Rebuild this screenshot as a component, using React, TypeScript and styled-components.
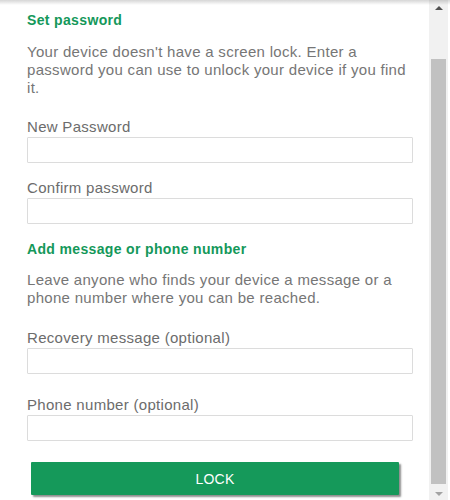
import React from "react";
import styled, { createGlobalStyle } from "styled-components";

const Global = createGlobalStyle`
  html, body { margin: 0; padding: 0; background: #ffffff; }
  body { font-family: "Liberation Sans", Arial, sans-serif; }
  * { box-sizing: border-box; }
`;

const Frame = styled.div`
  width: 450px;
  height: 500px;
  display: flex;
  flex-direction: row;
  overflow: hidden;
  position: relative;
  background: #fff;
  &::after {
    content: "";
    position: absolute;
    left: 0;
    right: 0;
    top: 0;
    height: 5px;
    background: linear-gradient(rgba(0, 0, 0, 0.16), rgba(0, 0, 0, 0));
    pointer-events: none;
  }
`;

const Content = styled.div`
  width: 429px;
  display: flex;
  flex-direction: column;
  padding: 0 16px 0 27px;
`;

const Heading = styled.h2<{ $top: number }>`
  margin: ${(p) => p.$top}px 0 0 0;
  font-size: 14px;
  line-height: 18px;
  letter-spacing: 0.35px;
  font-weight: bold;
  color: #14985a;
`;

const Paragraph = styled.p<{ $top: number }>`
  margin: ${(p) => p.$top}px 0 0 0;
  font-size: 15px;
  line-height: 18px;
  letter-spacing: 0.3px;
  color: #767676;
`;

const Field = styled.label<{ $top: number }>`
  display: flex;
  flex-direction: column;
  gap: 2px;
  margin-top: ${(p) => p.$top}px;
`;

const LabelText = styled.span`
  font-size: 15px;
  line-height: 16px;
  letter-spacing: 0.3px;
  color: #6c6c6c;
`;

const Input = styled.input`
  width: 386px;
  height: 26px;
  border: 1px solid #dcdcdc;
  border-radius: 1px;
  background: #fff;
  padding: 0 6px;
  font-size: 14px;
  font-family: inherit;
  outline: none;
`;

const LockButton = styled.button`
  margin: 21px 0 0 4px;
  width: 368px;
  height: 33px;
  border: none;
  border-radius: 1px;
  background: #15995a;
  color: #ffffff;
  font-family: "Liberation Sans", Arial, sans-serif;
  font-size: 14px;
  letter-spacing: 0.2px;
  box-shadow: 2px 2px 2px rgba(0, 0, 0, 0.45);
  cursor: pointer;
`;

const Scrollbar = styled.div`
  width: 19px;
  height: 500px;
  background: #f1f1f1;
  display: flex;
  flex-direction: column;
  align-items: center;
`;

const ArrowBox = styled.div`
  height: 14px;
  width: 100%;
  display: flex;
  align-items: center;
  justify-content: center;
`;

const UpArrow = styled.div`
  width: 0;
  height: 0;
  border-left: 4px solid transparent;
  border-right: 4px solid transparent;
  border-bottom: 4px solid #505050;
  margin-top: 1px;
`;

const DownArrow = styled.div`
  width: 0;
  height: 0;
  border-left: 4px solid transparent;
  border-right: 4px solid transparent;
  border-top: 4px solid #a3a3a3;
  margin-top: 2px;
`;

const TrackSpace = styled.div`
  flex: 1;
  width: 100%;
  display: flex;
  flex-direction: column;
  align-items: center;
  padding-top: 45px;
  padding-bottom: 2px;
`;

const Thumb = styled.div`
  width: 15px;
  height: 425px;
  background: #c1c1c1;
`;

const Spacer = styled.div`
  width: 2px;
  background: #fff;
`;

export default function App() {
  return (
    <>
      <Global />
      <Frame>
        <Content>
          <Heading $top={11}>Set password</Heading>
          <Paragraph $top={14}>
            Your device doesn't have a screen lock. Enter a password you can use to unlock your device if you find it.
          </Paragraph>
          <Field $top={22}>
            <LabelText>New Password</LabelText>
            <Input type="password" />
          </Field>
          <Field $top={17}>
            <LabelText>Confirm password</LabelText>
            <Input type="password" />
          </Field>
          <Heading $top={16}>Add message or phone number</Heading>
          <Paragraph $top={13}>
            Leave anyone who finds your device a message or a phone number where you can be reached.
          </Paragraph>
          <Field $top={23}>
            <LabelText>Recovery message (optional)</LabelText>
            <Input type="text" />
          </Field>
          <Field $top={23}>
            <LabelText>Phone number (optional)</LabelText>
            <Input type="text" />
          </Field>
          <LockButton>LOCK</LockButton>
        </Content>
        <Scrollbar>
          <ArrowBox>
            <UpArrow />
          </ArrowBox>
          <TrackSpace>
            <Thumb />
          </TrackSpace>
          <ArrowBox>
            <DownArrow />
          </ArrowBox>
        </Scrollbar>
        <Spacer />
      </Frame>
    </>
  );
}
